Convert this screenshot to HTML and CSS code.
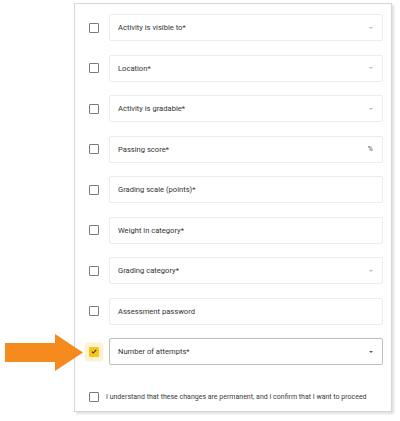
FILE: index.html
```html
<!DOCTYPE html>
<html>
<head>
<meta charset="utf-8">
<link rel="stylesheet" href="styles.css">
</head>
<body>
<div class="card">
  <div class="row"><span class="cb"></span><div class="field"><span>Activity is visible to*</span><span class="caret"></span></div></div>
  <div class="row"><span class="cb"></span><div class="field"><span>Location*</span><span class="caret"></span></div></div>
  <div class="row"><span class="cb"></span><div class="field"><span>Activity is gradable*</span><span class="caret"></span></div></div>
  <div class="row"><span class="cb"></span><div class="field"><span>Passing score*</span><span class="pct">%</span></div></div>
  <div class="row"><span class="cb"></span><div class="field"><span>Grading scale (points)*</span></div></div>
  <div class="row"><span class="cb"></span><div class="field"><span>Weight in category*</span></div></div>
  <div class="row"><span class="cb"></span><div class="field"><span>Grading category*</span><span class="caret"></span></div></div>
  <div class="row"><span class="cb"></span><div class="field"><span>Assessment password</span></div></div>
  <div class="row active">
    <span class="cb checked"><svg viewBox="0 0 10 10" width="10" height="10"><path d="M2.3 5.2 L4.1 7 L7.8 3.1" fill="none" stroke="#3a3000" stroke-width="1.3"/></svg></span>
    <div class="field dark"><span>Number of attempts*</span><span class="caret darkc"></span></div>
  </div>
  <div class="confirm"><span class="cb"></span><span>I understand that these changes are permanent, and I confirm that I want to proceed</span></div>
</div>
<svg class="arrow" width="80" height="38" viewBox="0 0 80 38"><polygon points="0,9 50,9 50,0 78,18.5 50,37 50,28 0,28" fill="#f58a1f"/></svg>
</body>
</html>
```
FILE: styles.css
```css
html, body { margin: 0; padding: 0; background: #fff; }
body { width: 400px; height: 421px; position: relative; font-family: Roboto, "Liberation Sans", sans-serif; color: #333; overflow: hidden; }
.card {
  margin: 3px 0 0 74px;
  width: 318px;
  height: 409px;
  box-sizing: border-box;
  border: 1px solid #d6d6d6;
  box-shadow: 2px 2px 2px rgba(0,0,0,0.12);
  padding: 10px 8px 0 14px;
  display: flex;
  flex-direction: column;
  gap: 13.5px;
}
.row { display: flex; align-items: center; height: 27px; }
.cb {
  width: 8px; height: 8px; border: 1px solid #7a7a7a; border-radius: 1px;
  flex: none; margin-right: 10px; box-sizing: content-box; display: flex; align-items: center; justify-content: center;
}
.cb.checked {
  background: #f8c617; border-color: #f8c617;
  box-shadow: 0 0 0 4.5px #fdf3d2;
}
.cb.checked svg { width: 9px; height: 9px; }
.field {
  flex: 1; height: 27px; box-sizing: border-box;
  border: 1px solid #ececec; border-radius: 2px;
  display: flex; align-items: center; justify-content: space-between;
  padding: 0 9px 0 8px; font-size: 7.6px;
}
.field.dark { border-color: #bdbdbd; }
.caret { width: 0; height: 0; border-left: 2.5px solid transparent; border-right: 2.5px solid transparent; border-top: 2.5px solid #bdbdbd; }
.caret.darkc { border-top-color: #555; }
.pct { font-size: 7px; color: #555; }
.confirm { display: flex; align-items: center; margin-top: 13px; font-size: 7px; color: #3a3a3a; }
.confirm .cb { margin-right: 7px; }
.arrow { position: absolute; left: 5px; top: 334px; }
```
